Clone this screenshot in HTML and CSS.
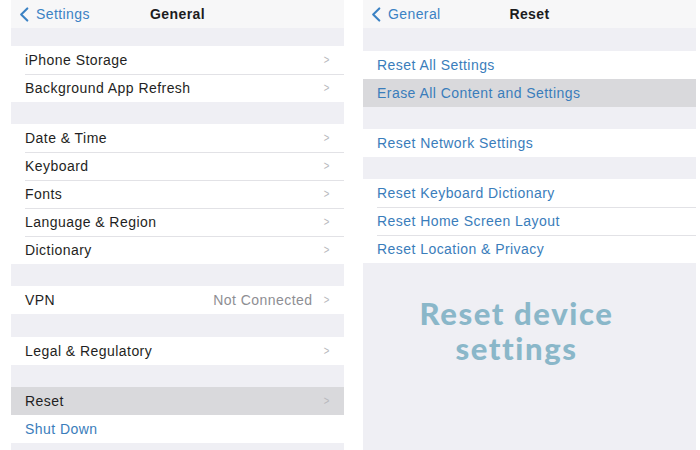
FILE: index.html
```html
<!DOCTYPE html>
<html>
<head>
<meta charset="utf-8">
<link rel="stylesheet" href="styles.css">
</head>
<body>
<div class="page">
  <section class="panel">
    <header class="nav">
      <span class="back"><svg class="chev-back" viewBox="0 0 10 16" width="10" height="15"><path d="M8.5 1.5 L2 8 L8.5 14.5" fill="none" stroke="#3b82c4" stroke-width="2.2" stroke-linecap="round" stroke-linejoin="round"/></svg>Settings</span>
      <span class="title">General</span>
    </header>
    <div class="gap g18"></div>
    <div class="group">
      <div class="row"><span class="label">iPhone Storage</span><span class="chev">&gt;</span></div>
      <div class="row"><span class="label">Background App Refresh</span><span class="chev">&gt;</span></div>
    </div>
    <div class="gap"></div>
    <div class="group">
      <div class="row"><span class="label">Date &amp; Time</span><span class="chev">&gt;</span></div>
      <div class="row"><span class="label">Keyboard</span><span class="chev">&gt;</span></div>
      <div class="row"><span class="label">Fonts</span><span class="chev">&gt;</span></div>
      <div class="row"><span class="label">Language &amp; Region</span><span class="chev">&gt;</span></div>
      <div class="row"><span class="label">Dictionary</span><span class="chev">&gt;</span></div>
    </div>
    <div class="gap"></div>
    <div class="group">
      <div class="row"><span class="label">VPN</span><span class="value">Not Connected</span><span class="chev">&gt;</span></div>
    </div>
    <div class="gap g23"></div>
    <div class="group">
      <div class="row"><span class="label">Legal &amp; Regulatory</span><span class="chev">&gt;</span></div>
    </div>
    <div class="gap"></div>
    <div class="group">
      <div class="row active"><span class="label">Reset</span><span class="chev">&gt;</span></div>
      <div class="row"><span class="label link">Shut Down</span></div>
    </div>
    <div class="fill"></div>
  </section>

  <section class="panel">
    <header class="nav">
      <span class="back"><svg class="chev-back" viewBox="0 0 10 16" width="10" height="15"><path d="M8.5 1.5 L2 8 L8.5 14.5" fill="none" stroke="#3b82c4" stroke-width="2.2" stroke-linecap="round" stroke-linejoin="round"/></svg>General</span>
      <span class="title">Reset</span>
    </header>
    <div class="gap g23"></div>
    <div class="group">
      <div class="row"><span class="label link">Reset All Settings</span></div>
      <div class="row active"><span class="label link">Erase All Content and Settings</span></div>
    </div>
    <div class="gap"></div>
    <div class="group">
      <div class="row"><span class="label link">Reset Network Settings</span></div>
    </div>
    <div class="gap"></div>
    <div class="group">
      <div class="row"><span class="label link">Reset Keyboard Dictionary</span></div>
      <div class="row"><span class="label link">Reset Home Screen Layout</span></div>
      <div class="row"><span class="label link">Reset Location &amp; Privacy</span></div>
    </div>
    <div class="fill promo">
      <div class="headline">
        <span class="hl-line">Reset device</span>
        <span class="hl-line">settings</span>
      </div>
    </div>
  </section>
</div>
</body>
</html>
```

FILE: styles.css
```css
html, body {
  margin: 0;
  padding: 0;
  background: #ffffff;
}
body {
  width: 700px;
  height: 450px;
  overflow: hidden;
  font-family: "Liberation Sans", Arial, sans-serif;
}
.page {
  display: flex;
  gap: 19px;
  padding-left: 11px;
  height: 450px;
}
.panel {
  width: 333px;
  display: flex;
  flex-direction: column;
  background: #efeff4;
  height: 450px;
}
.nav {
  position: relative;
  height: 28px;
  background: #f7f7f8;
  display: flex;
  align-items: center;
  font-size: 14px;
  letter-spacing: 0.4px;
}
.back {
  display: flex;
  align-items: center;
  color: #3b82c4;
  padding-left: 8px;
  gap: 7px;
}
.title {
  position: absolute;
  left: 0;
  right: 0;
  text-align: center;
  font-weight: bold;
  color: #1c1c1e;
  pointer-events: none;
}
.gap {
  height: 22px;
  flex: none;
}
.gap.g18 { height: 18px; }
.gap.g23 { height: 23px; }
.group {
  background: #ffffff;
  flex: none;
}
.row {
  height: 28px;
  display: flex;
  align-items: center;
  padding-left: 14px;
  padding-right: 14px;
  font-size: 14px;
  letter-spacing: 0.45px;
  color: #1f1f23;
  position: relative;
}
.row + .row::before {
  content: "";
  position: absolute;
  top: 0;
  left: 14px;
  right: 0;
  height: 1px;
  background: #e2e2e6;
}
.row.active {
  background: #d9d9dc;
}
.row.active + .row::before,
.row.active::before {
  display: none;
}
.label {
  flex: 1;
}
.link {
  color: #3a7dbb;
}
.value {
  color: #8e8e93;
  margin-right: 10px;
}
.chev {
  color: #b8b8bd;
  font-size: 12px;
  transform: scaleX(0.8);
}
.fill {
  flex: 1;
}
.promo {
  display: flex;
  justify-content: center;
  padding-right: 26px;
}
.headline {
  margin-top: 33px;
  display: flex;
  flex-direction: column;
  align-items: center;
  font-family: Lato, "Open Sans", sans-serif;
  font-weight: 900;
  font-size: 31px;
  line-height: 35px;
  color: #8ab7c9;
  letter-spacing: 1.6px;
}
.hl-line {
  display: block;
}
```
